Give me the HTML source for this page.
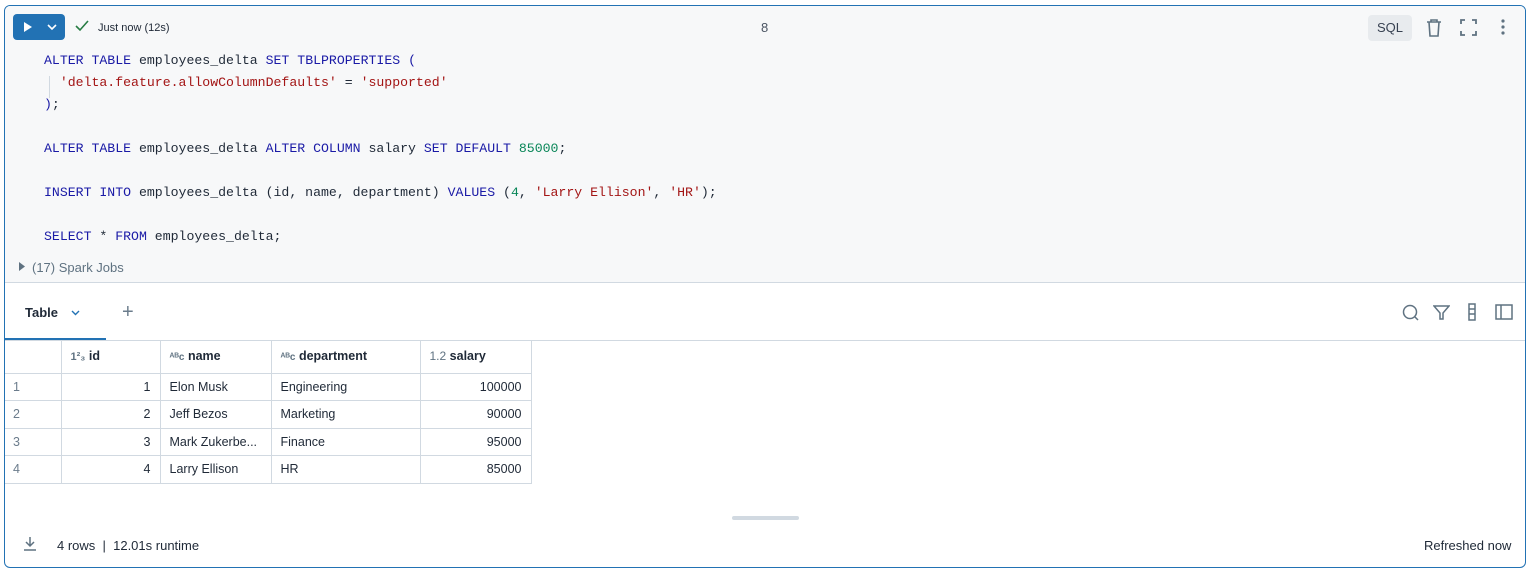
<!DOCTYPE html>
<html><head><meta charset="utf-8"><style>
*{box-sizing:border-box;margin:0;padding:0}
body{width:1529px;height:572px;background:#fff;font-family:"Liberation Sans",sans-serif;color:#1f2937;position:relative;overflow:hidden}
.cell{position:absolute;left:4px;top:5px;width:1522px;height:563px;border:1px solid #2272b4;border-radius:6px;overflow:hidden;background:#fff}
.top{position:absolute;left:0;top:0;width:100%;height:277px;background:#f7f8f9}
.run{position:absolute;left:8px;top:8px;width:52px;height:26px;background:#2272b4;border-radius:4px}
.code{position:absolute;left:39px;top:44px;font-family:"Liberation Mono",monospace;font-size:13.2px;line-height:22px;white-space:pre;color:#1f2937}
.k{color:#1a1aa6}.s{color:#a31515}.n{color:#098658}
.spark{position:absolute;left:0;top:242px;width:100%;height:35px;border-bottom:1px solid #d1d9e1;background:#f7f8f9;font-size:13px;color:#5f7281}
.abs{position:absolute}
table{position:absolute;left:-1px;top:334px;border-collapse:collapse;font-size:12.5px}
td{border:1px solid #d1d9e1;height:27.5px;padding:0 9px;color:#1f2937}
tr td:first-child{border-left:none;color:#6b7c8c;width:57px}
tr:first-child td{border-top:none;height:33px;font-weight:bold}
.r{text-align:right}
</style></head><body>
<div class="cell">
<div class="top"></div>
<div class="run">
<svg class="abs" style="left:10px;top:8px" width="10" height="10"><path d="M1 0 L9 5 L1 10Z" fill="#fff"/></svg>
<svg class="abs" style="left:34px;top:10px" width="10" height="7"><path d="M1 1 L5 5 L9 1" stroke="#fff" stroke-width="1.6" fill="none"/></svg>
</div>
<svg class="abs" style="left:70px;top:14px" width="14" height="12"><path d="M1 6 L5 10 L13 1" stroke="#277c43" stroke-width="1.6" fill="none"/></svg>
<div class="abs" style="left:93px;top:16px;font-size:11px;color:#1f2937">Just now (12s)</div>
<div class="abs" style="left:756px;top:14px;font-size:13px;color:#4b5563">8</div>
<div class="abs" style="left:1363px;top:9px;width:44px;height:26px;background:#e8ebee;border-radius:4px;font-size:13px;line-height:26px;text-align:center;color:#374151">SQL</div>
<svg class="abs" style="left:1420px;top:12px" width="18" height="20"><path d="M2 4h14M6 4V2h6v2M4 4l1 14h8l1-14" stroke="#5f7281" stroke-width="1.6" fill="none"/></svg>
<svg class="abs" style="left:1455px;top:13px" width="17" height="17"><path d="M1 5V1h4M12 1h4v4M16 12v4h-4M5 16H1v-4" stroke="#5f7281" stroke-width="1.8" fill="none"/></svg>
<svg class="abs" style="left:1495px;top:12px" width="6" height="18"><circle cx="3" cy="3" r="1.6" fill="#5f7281"/><circle cx="3" cy="9" r="1.6" fill="#5f7281"/><circle cx="3" cy="15" r="1.6" fill="#5f7281"/></svg>
<div class="abs" style="left:44px;top:70px;width:1px;height:22px;background:#d1d9e1"></div>
<div class="code"><span class="k">ALTER TABLE</span> employees_delta <span class="k">SET</span> <span class="k">TBLPROPERTIES</span> <span class="k">(</span>
  <span class="s">'delta.feature.allowColumnDefaults'</span> = <span class="s">'supported'</span>
<span class="k">)</span>;

<span class="k">ALTER TABLE</span> employees_delta <span class="k">ALTER COLUMN</span> salary <span class="k">SET DEFAULT</span> <span class="n">85000</span>;

<span class="k">INSERT INTO</span> employees_delta (id, name, department) <span class="k">VALUES</span> (<span class="n">4</span>, <span class="s">'Larry Ellison'</span>, <span class="s">'HR'</span>);

<span class="k">SELECT</span> * <span class="k">FROM</span> employees_delta;</div>
<div class="spark"><svg class="abs" style="left:14px;top:14px" width="6" height="9"><path d="M0 0L6 4.5L0 9Z" fill="#5f7281"/></svg><span class="abs" style="left:27px;top:12px">(17) Spark Jobs</span></div>
<div class="abs" style="left:20px;top:299px;font-size:13px;font-weight:bold">Table</div>
<svg class="abs" style="left:66px;top:304px" width="9" height="6"><path d="M1 1L4.5 4.5L8 1" stroke="#2272b4" stroke-width="1.4" fill="none"/></svg>
<div class="abs" style="left:117px;top:295px;font-size:20px;color:#6b7c8c;font-weight:300">+</div>
<div class="abs" style="left:0;top:332px;width:101px;height:3px;background:#2272b4"></div>
<div class="abs" style="left:0;top:334px;width:100%;height:1px;background:#d1d9e1"></div>
<svg class="abs" style="left:1397px;top:298px" width="18" height="18"><circle cx="8" cy="8" r="6.5" stroke="#5f7281" stroke-width="1.5" fill="none"/><path d="M13 13l3 3" stroke="#5f7281" stroke-width="1.5"/></svg>
<svg class="abs" style="left:1428px;top:298px" width="17" height="17"><path d="M1 2h15l-6 7v6h-3V9Z" stroke="#5f7281" stroke-width="1.5" fill="none"/></svg>
<svg class="abs" style="left:1463px;top:297px" width="8" height="18"><rect x="1" y="1" width="6" height="16" stroke="#5f7281" stroke-width="1.5" fill="none"/><path d="M1 6h6M1 11h6" stroke="#5f7281" stroke-width="1.5"/></svg>
<svg class="abs" style="left:1490px;top:298px" width="18" height="16"><rect x="1" y="1" width="16" height="14" stroke="#5f7281" stroke-width="1.5" fill="none"/><path d="M6 1v14" stroke="#5f7281" stroke-width="1.5"/></svg>
<table>
<tr><td></td><td style="width:99px"><span style="font-size:11px;color:#5f7281">1²₃</span> id</td><td style="width:111px"><span style="font-size:10px;color:#5f7281">ᴬᴮc</span> name</td><td style="width:149px"><span style="font-size:10px;color:#5f7281">ᴬᴮc</span> department</td><td style="width:111px"><span style="font-size:12px;color:#5f7281;font-weight:normal">1.2</span> salary</td></tr>
<tr><td>1</td><td class="r">1</td><td>Elon Musk</td><td>Engineering</td><td class="r">100000</td></tr>
<tr><td>2</td><td class="r">2</td><td>Jeff Bezos</td><td>Marketing</td><td class="r">90000</td></tr>
<tr><td>3</td><td class="r">3</td><td>Mark Zukerbe...</td><td>Finance</td><td class="r">95000</td></tr>
<tr><td>4</td><td class="r">4</td><td>Larry Ellison</td><td>HR</td><td class="r">85000</td></tr>
</table>
<div class="abs" style="left:727px;top:510px;width:67px;height:4px;background:#d1d9e1;border-radius:2px"></div>
<svg class="abs" style="left:18px;top:530px" width="14" height="15"><path d="M7 1v9M3 6l4 4 4-4M1 14h12" stroke="#5f7281" stroke-width="1.5" fill="none"/></svg>
<div class="abs" style="left:52px;top:532px;font-size:13px">4 rows &nbsp;|&nbsp; 12.01s runtime</div>
<div class="abs" style="left:1419px;top:532px;font-size:13px">Refreshed now</div>
</div>
</body></html>
